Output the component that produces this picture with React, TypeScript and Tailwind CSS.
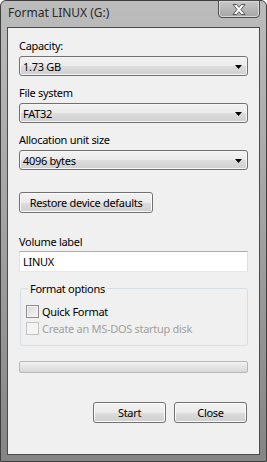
import React from 'react'

const font = {fontFamily: '"Noto Sans", "Liberation Sans", sans-serif'}

const Combo = ({value}: {value: string}) => (
  <div className="flex h-[20px] items-center justify-between rounded-[3px] border border-[#707070] bg-[linear-gradient(#f2f2f2,#ebebeb_50%,#dddddd_50%,#cfcfcf)] pl-[3px] pr-[5px] text-[11px] leading-none tracking-[-0.3px] text-black shadow-[inset_0_0_0_1px_#f6f6f6]">
    <span>{value}</span>
    <svg width="7" height="4" viewBox="0 0 7 4" className="mt-[1px]">
      <path d="M0 0h7L3.5 4z" fill="#000" />
    </svg>
  </div>
)

const Button = ({children, className = ''}: {children: React.ReactNode; className?: string}) => (
  <div
    className={`flex h-[21px] items-center justify-center rounded-[3px] border border-[#707070] bg-[linear-gradient(#f2f2f2,#ebebeb_50%,#dddddd_50%,#cfcfcf)] text-[11px] leading-none tracking-[-0.3px] text-black shadow-[inset_0_0_0_1px_#fcfcfc] ${className}`}
  >
    {children}
  </div>
)

const Checkbox = ({label, disabled = false}: {label: string; disabled?: boolean}) => (
  <div className="flex h-[13px] items-center gap-[3px]">
    <div
      className={
        disabled
          ? 'h-[13px] w-[13px] border border-[#c3c3c3] bg-[#f4f4f4]'
          : 'h-[13px] w-[13px] border border-[#8e8f8f] bg-linear-to-br from-[#d8d8d8] to-[#f6f6f6] shadow-[inset_0_0_0_1px_#f4f4f4]'
      }
    />
    <span
      className={
        disabled
          ? 'text-[11px] leading-none tracking-[-0.3px] text-[#a0a0a0]'
          : 'text-[11px] leading-none tracking-[-0.3px] text-black'
      }
    >
      {label}
    </span>
  </div>
)

const Label = ({children, className = ''}: {children: React.ReactNode; className?: string}) => (
  <div className={`h-[15px] text-[11px] leading-[15px] tracking-[-0.3px] text-black ${className}`}>{children}</div>
)

export default function App() {
  return (
    <div
      style={font}
      className="flex h-[462px] w-[267px] flex-col rounded-t-[6px] border border-[#3f3f3f] bg-linear-to-b from-[#bcbcbc] via-[#a2a2a2] to-[#858585] px-[6px] pb-[6px]"
    >
      {/* title bar */}
      <div className="flex h-[26px] items-start justify-between">
        <div className="pl-[1px] pt-[4px] text-[12px] leading-[16px] text-[#2a2a2a]">Format LINUX (G:)</div>
        <div className="flex h-[18px] w-[42px] -mt-px items-center justify-center rounded-b-[4px] border border-[#4d4d4d] bg-linear-to-b from-[#c9c9c9] to-[#a5a5a5] shadow-[inset_0_0_0_1px_#dadada]">
          <svg width="16" height="13" viewBox="0 0 16 13">
            <path
              d="M2 1.5h3.6L8 4.3l2.4-2.8H14L10 6.5l4 5h-3.6L8 8.7l-2.4 2.8H2l4-5z"
              fill="#ffffff"
              stroke="#555555"
              strokeWidth="1"
              strokeLinejoin="round"
            />
          </svg>
        </div>
      </div>

      {/* client area */}
      <div className="flex flex-1 flex-col border border-[#4a4a4a] bg-[#f0f0f0] pl-[11px] pr-[11px] pt-[10px]">
        <Label>Capacity:</Label>
        <div className="mt-[3px]">
          <Combo value="1.73 GB" />
        </div>

        <Label className="mt-[9px]">File system</Label>
        <div className="mt-[3px]">
          <Combo value="FAT32" />
        </div>

        <Label className="mt-[9px]">Allocation unit size</Label>
        <div className="mt-[3px]">
          <Combo value="4096 bytes" />
        </div>

        <Button className="mt-[22px] w-[134px]">Restore device defaults</Button>

        <Label className="mt-[21px]">Volume label</Label>
        <div className="mt-[2px] flex h-[21px] items-center border border-[#abadb3] border-r-[#dbdfe6] border-b-[#e3e9ef] border-l-[#e2e3ea] bg-white pl-[3px] text-[11px] leading-none tracking-[-0.3px] text-black">
          LINUX
        </div>

        <fieldset className="ml-[1px] mt-[9px] h-[65px] rounded-[3px] border border-[#d5dfe5] pl-[5px]">
          <legend className="ml-[2px] px-[2px] text-[11px] leading-[15px] tracking-[-0.3px] text-black">
            Format options
          </legend>
          <div className="mt-[9px] flex flex-col gap-[4px]">
            <Checkbox label="Quick Format" />
            <Checkbox label="Create an MS-DOS startup disk" disabled />
          </div>
        </fieldset>

        <div className="mt-[15px] h-[12px] rounded-[2px] border border-[#b8b8b8] bg-linear-to-b from-[#f3f3f3] via-[#e4e4e4] to-[#d8d8d8]" />

        <div className="mt-[29px] flex justify-end gap-[8px] pr-[1px]">
          <Button className="w-[73px]">Start</Button>
          <Button className="w-[73px]">Close</Button>
        </div>
      </div>
    </div>
  )
}
